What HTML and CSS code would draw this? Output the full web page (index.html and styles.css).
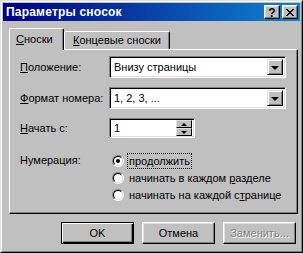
FILE: index.html
```html
<!DOCTYPE html>
<html lang="ru">
<head>
<meta charset="utf-8">
<title>Параметры сносок</title>
<link rel="stylesheet" href="styles.css">
</head>
<body>
<div class="window">
  <div class="frame">
    <div class="titlebar">
      <span class="title">Параметры сносок</span>
      <div class="tbtns">
        <span class="tbtn help">?</span>
        <span class="tbtn close"><svg width="8" height="7" viewBox="0 0 8 7"><path d="M0 0h2v1h1v1h2v-1h1v-1h2v1h-1v1h-1v1h-1v1h1v1h1v1h1v1h-2v-1h-1v-1h-2v1h-1v1h-2v-1h1v-1h1v-1h1v-1h-1v-1h-1v-1h-1z" fill="#000"/></svg></span>
      </div>
    </div>
    <div class="content">
      <div class="tabs">
        <div class="tab active"><u>С</u>носки</div>
        <div class="tab"><u>К</u>онцевые сноски</div>
      </div>
      <div class="panel">
        <div class="row">
          <label class="lbl"><u>П</u>оложение:</label>
          <div class="combo">
            <span class="ctext">Внизу страницы</span>
            <span class="dbtn"><span class="arrow down"></span></span>
          </div>
        </div>
        <div class="row">
          <label class="lbl"><u>Ф</u>ормат номера:</label>
          <div class="combo">
            <span class="ctext">1, 2, 3, ...</span>
            <span class="dbtn"><span class="arrow down"></span></span>
          </div>
        </div>
        <div class="row spinrow">
          <label class="lbl"><u>Н</u>ачать с:</label>
          <div class="spin">
            <span class="ctext">1</span>
            <span class="sbtns">
              <span class="sbtn"><span class="sarrow up"></span></span>
              <span class="sbtn"><span class="sarrow sdown"></span></span>
            </span>
          </div>
        </div>
        <div class="row radiorow">
          <label class="lbl">Нумерация:</label>
          <div class="radios">
            <div class="radio"><span class="rc"><span class="rci"><span class="dot"></span></span></span><span class="rtext focus">про<u>д</u>олжить</span></div>
            <div class="radio"><span class="rc"><span class="rci"></span></span><span class="rtext">начинать в каждом <u>р</u>азделе</span></div>
            <div class="radio"><span class="rc"><span class="rci"></span></span><span class="rtext">начинать на каждой с<u>т</u>ранице</span></div>
          </div>
        </div>
      </div>
      <div class="buttons">
        <div class="btn default"><span class="bi">OK</span></div>
        <div class="btn"><span class="bi">Отмена</span></div>
        <div class="btn disabled"><span class="bi">Заменить...</span></div>
      </div>
    </div>
  </div>
</div>
</body>
</html>
```

FILE: styles.css
```css
* { box-sizing: border-box; }
html, body { margin: 0; padding: 0; background: #c0c0c0; }
body {
  font-family: "Liberation Sans", Arial, sans-serif;
  font-size: 11px;
  color: #000;
}
u { text-decoration: underline; text-underline-offset: 1px; }

.window {
  width: 303px;
  height: 253px;
  border: 1px solid;
  border-color: #dfdfdf #000 #000 #dfdfdf;
  background: #c0c0c0;
}
.frame {
  height: 100%;
  border: 1px solid;
  border-color: #fff #808080 #808080 #fff;
  padding: 1px;
  display: flex;
  flex-direction: column;
}
.titlebar {
  height: 18px;
  background: linear-gradient(to right, #000080, #1084d0);
  display: flex;
  align-items: center;
  justify-content: space-between;
  padding: 0 2px 0 3px;
}
.title {
  color: #fff;
  font-weight: bold;
  font-size: 12px;
  letter-spacing: 0.2px;
}
.tbtns { display: flex; gap: 2px; }
.tbtn {
  width: 16px;
  height: 14px;
  background: #c0c0c0;
  border: 1px solid;
  border-color: #fff #000 #000 #fff;
  box-shadow: inset -1px -1px #808080, inset 1px 1px #dfdfdf;
  display: flex;
  align-items: center;
  justify-content: center;
  font-weight: bold;
  font-size: 12px;
  line-height: 1;
}
.tbtn.help { padding-top: 1px; }

.content {
  flex: 1;
  padding: 8px 2px 0 6px;
  display: flex;
  flex-direction: column;
}
.tabs {
  display: flex;
  align-items: flex-end;
  height: 21px;
  position: relative;
  z-index: 1;
  margin-bottom: -1px;
}
.tab {
  height: 18px;
  padding: 2px 8px 0 8px;
  border: 1px solid;
  border-bottom: none;
  border-color: #fff #000 transparent #fff;
  box-shadow: inset -1px 0 #808080;
  border-radius: 2px 2px 0 0;
  background: #c0c0c0;
  margin-bottom: 1px;
}
.tab.active {
  height: 22px;
  padding: 4px 8px 0 6px;
  margin-bottom: 0;
  width: 55px;
}
.panel {
  height: 165px;
  border: 1px solid;
  border-color: #fff #000 #000 #fff;
  box-shadow: inset -1px -1px #808080;
  padding: 6px 0 0 10px;
  display: flex;
  flex-direction: column;
  gap: 9px;
}
.row {
  display: flex;
  align-items: center;
}
.lbl { width: 89px; }

.combo, .spin {
  height: 22px;
  background: #fff;
  border: 1px solid;
  border-color: #808080 #fff #fff #808080;
  box-shadow: inset 1px 1px #000, inset -1px -1px #dfdfdf;
  display: flex;
  align-items: center;
  padding: 2px;
}
.combo { width: 177px; }
.spin { width: 86px; height: 20px; }
.ctext { flex: 1; padding-left: 2px; }

.dbtn {
  width: 16px;
  height: 16px;
  background: #c0c0c0;
  border: 1px solid;
  border-color: #dfdfdf #000 #000 #dfdfdf;
  box-shadow: inset 1px 1px #fff, inset -1px -1px #808080;
  display: flex;
  align-items: center;
  justify-content: center;
}
.arrow.down {
  width: 0; height: 0;
  border-left: 4px solid transparent;
  border-right: 4px solid transparent;
  border-top: 4px solid #000;
  margin-top: 1px;
}
.sbtns {
  display: flex;
  flex-direction: column;
  width: 16px;
  height: 16px;
}
.sbtn {
  flex: 1;
  background: #c0c0c0;
  border: 1px solid;
  border-color: #dfdfdf #000 #000 #dfdfdf;
  display: flex;
  align-items: center;
  justify-content: center;
}
.sarrow {
  width: 0; height: 0;
  border-left: 3px solid transparent;
  border-right: 3px solid transparent;
}
.sarrow.up { border-bottom: 3px solid #000; }
.sarrow.sdown { border-top: 3px solid #000; }

.radiorow { align-items: flex-start; margin-top: 5px; }
.radiorow .lbl { line-height: 17px; }
.radios { display: flex; flex-direction: column; margin-left: 3px; }
.radio {
  height: 17px;
  display: flex;
  align-items: center;
  gap: 3px;
}
.rc {
  width: 12px;
  height: 12px;
  border-radius: 50%;
  border: 1px solid;
  border-color: #808080 #fff #fff #808080;
  display: flex;
}
.rci {
  flex: 1;
  border-radius: 50%;
  border: 1px solid;
  border-color: #000 #dfdfdf #dfdfdf #000;
  background: #fff;
  display: flex;
  align-items: center;
  justify-content: center;
}
.dot { width: 4px; height: 4px; border-radius: 50%; background: #000; }
.rtext { padding: 1px 1px; border: 1px solid transparent; }
.rtext.focus { border: 1px dotted #000; }

.buttons {
  display: flex;
  justify-content: flex-end;
  gap: 8px;
  padding: 8px 2px 0 0;
}
.btn {
  width: 73px;
  height: 22px;
  border: 1px solid;
  border-color: #fff #000 #000 #fff;
  box-shadow: inset -1px -1px #808080, inset 1px 1px #dfdfdf;
  display: flex;
  align-items: center;
  justify-content: center;
}
.btn.default {
  border: 1px solid #000;
  box-shadow: inset 1px 1px #fff, inset -1px -1px #000, inset -2px -2px #808080;
}
.btn.disabled .bi { color: #808080; text-shadow: 1px 1px #fff; }
```
